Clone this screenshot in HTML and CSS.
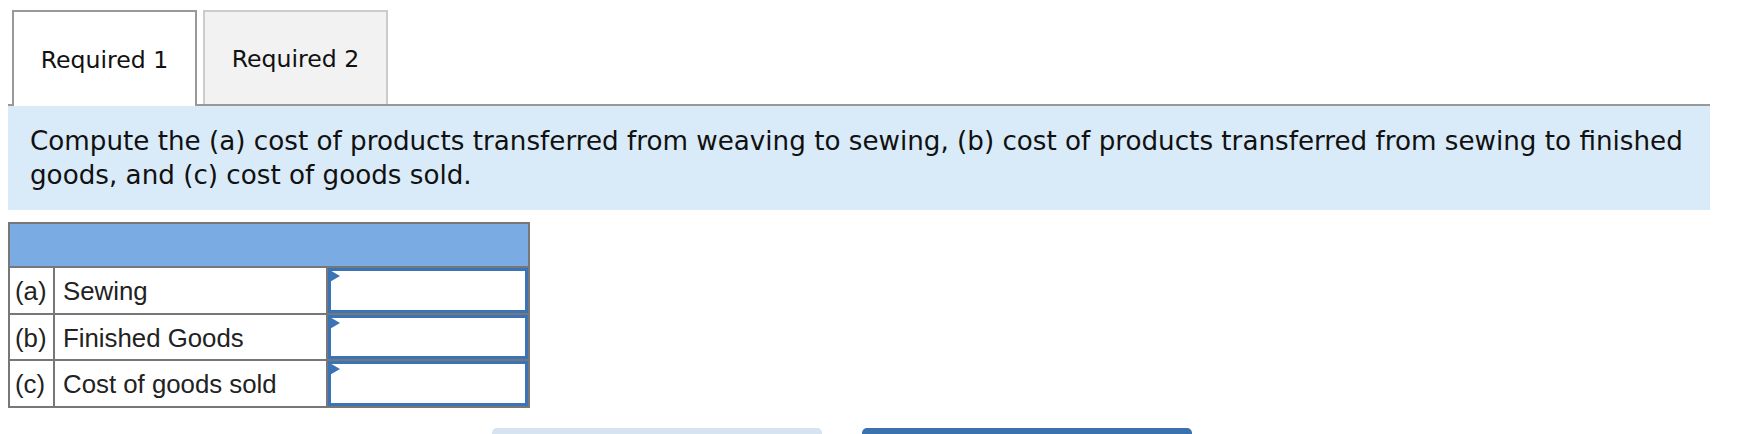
FILE: index.html
```html
<!DOCTYPE html>
<html>
<head>
<meta charset="utf-8">
<link rel="stylesheet" href="styles.css">
</head>
<body>
<div class="page">
  <div class="tabs">
    <div class="tab tab-active">Required 1</div>
    <div class="tab tab-idle">Required 2</div>
  </div>
  <div class="prompt">Compute the (a) cost of products transferred from weaving to sewing, (b) cost of products transferred from sewing to finished goods, and (c) cost of goods sold.</div>
  <table class="grid">
    <tr class="head"><td colspan="3"></td></tr>
    <tr>
      <td class="lab">(a)</td>
      <td class="name">Sewing</td>
      <td class="val"><div class="input"><span class="flag"></span></div></td>
    </tr>
    <tr>
      <td class="lab">(b)</td>
      <td class="name">Finished Goods</td>
      <td class="val"><div class="input"><span class="flag"></span></div></td>
    </tr>
    <tr>
      <td class="lab">(c)</td>
      <td class="name">Cost of goods sold</td>
      <td class="val"><div class="input"><span class="flag"></span></div></td>
    </tr>
  </table>
  <div class="buttons">
    <div class="btn btn-prev"></div>
    <div class="btn btn-next"></div>
  </div>
</div>
</body>
</html>
```

FILE: styles.css
```css
html, body {
  margin: 0;
  padding: 0;
  background: #fff;
}
.page {
  padding: 10px 0 0 8px;
  height: 434px;
  box-sizing: border-box;
  overflow: hidden;
  font-family: "DejaVu Sans", Verdana, sans-serif;
  color: #111;
}
.tabs {
  display: flex;
  align-items: flex-end;
  gap: 6px;
  width: 1702px;
  box-sizing: border-box;
  padding-left: 4px;
  border-bottom: 2px solid #999;
  height: 96px;
}
.tab {
  box-sizing: border-box;
  width: 185px;
  display: flex;
  align-items: center;
  justify-content: center;
  font-size: 23.6px;
  border-style: solid;
  border-width: 2px 2px 0 2px;
}
.tab-active {
  height: 96px;
  margin-bottom: -2px;
  border-color: #999;
  background: #fff;
  padding-top: 1px;
}
.tab-idle {
  height: 94px;
  border-color: #ccc;
  background: #f2f2f2;
  padding-top: 1px;
}
.prompt {
  width: 1702px;
  box-sizing: border-box;
  background: #d9ebf8;
  padding: 19px 22px 17px 22px;
  height: 104px;
  font-size: 26.2px;
  line-height: 33.5px;
}
.grid {
  margin-top: 12px;
  border-collapse: collapse;
  border: 2px solid #777;
  font-family: "Liberation Sans", Arial, sans-serif;
  font-size: 25.8px;
  color: #222;
}
.grid td {
  border: 2px solid #777;
  padding: 0;
  height: 44px;
}
.head td {
  background: #7aace3;
  height: 42px;
}
.lab {
  width: 45px;
  box-sizing: border-box;
  padding: 3px 0 0 5px !important;
}
.name {
  width: 273px;
  box-sizing: border-box;
  padding: 3px 0 0 8px !important;
}
.val {
  width: 202px;
  box-sizing: border-box;
  vertical-align: top;
}
.input {
  position: relative;
  box-sizing: border-box;
  height: 44.5px;
  border: 3px solid #3a74b7;
  background: #fff;
}
.flag {
  position: absolute;
  left: -3px;
  top: -2px;
  width: 0;
  height: 0;
  border-top: 7px solid transparent;
  border-bottom: 7px solid transparent;
  border-left: 12px solid #3a74b7;
}
.buttons {
  display: flex;
  gap: 40px;
  margin-top: 20px;
  padding-left: 484px;
}
.btn {
  width: 330px;
  height: 40px;
  border-radius: 5px 5px 0 0;
}
.btn-prev {
  background: #d6e3f0;
}
.btn-next {
  background: #3a72b0;
}
```
